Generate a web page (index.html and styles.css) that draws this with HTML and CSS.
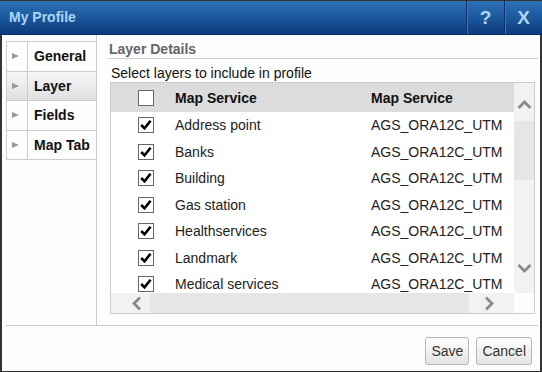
FILE: index.html
```html
<!DOCTYPE html>
<html lang="en">
<head>
  <meta charset="UTF-8">
  <title>My Profile</title>
  <link rel="stylesheet" href="styles.css">
</head>
<body>

  <div class="dialog">
    <div class="titlebar">
      <span class="title">My Profile</span>
      <span class="tb-btn">?</span>
      <span class="tb-btn">X</span>
    </div>

    <div class="dialog-body">
      <div class="main">
        <div class="nav">
          <ul>
            <li><span class="arrow"><svg width="7" height="6" viewBox="0 0 7 6"><path d="M0 0 L7 3 L0 6 Z"/></svg></span><span class="label">General</span></li>
            <li class="active"><span class="arrow"><svg width="7" height="6" viewBox="0 0 7 6"><path d="M0 0 L7 3 L0 6 Z"/></svg></span><span class="label">Layer</span></li>
            <li><span class="arrow"><svg width="7" height="6" viewBox="0 0 7 6"><path d="M0 0 L7 3 L0 6 Z"/></svg></span><span class="label">Fields</span></li>
            <li><span class="arrow"><svg width="7" height="6" viewBox="0 0 7 6"><path d="M0 0 L7 3 L0 6 Z"/></svg></span><span class="label">Map Tab</span></li>
          </ul>
        </div>

        <div class="panel">
          <div class="section-title">Layer Details</div>
          <div class="hint">Select layers to include in profile</div>

          <div class="grid">
            <div class="grid-top">
              <div class="grid-view">
                <div class="row head">
                  <span class="cell chk"><span class="box"></span></span>
                  <span class="cell">Map Service</span>
                  <span class="cell">Map Service</span>
                </div>
                <div class="rows">
                  <div class="row"><span class="cell chk"><span class="box checked"><svg viewBox="0 0 16 16"><path d="M2.5 8 L6.3 11.8 L13.2 3.2"/></svg></span></span><span class="cell">Address point</span><span class="cell">AGS_ORA12C_UTM</span></div>
                  <div class="row"><span class="cell chk"><span class="box checked"><svg viewBox="0 0 16 16"><path d="M2.5 8 L6.3 11.8 L13.2 3.2"/></svg></span></span><span class="cell">Banks</span><span class="cell">AGS_ORA12C_UTM</span></div>
                  <div class="row"><span class="cell chk"><span class="box checked"><svg viewBox="0 0 16 16"><path d="M2.5 8 L6.3 11.8 L13.2 3.2"/></svg></span></span><span class="cell">Building</span><span class="cell">AGS_ORA12C_UTM</span></div>
                  <div class="row"><span class="cell chk"><span class="box checked"><svg viewBox="0 0 16 16"><path d="M2.5 8 L6.3 11.8 L13.2 3.2"/></svg></span></span><span class="cell">Gas station</span><span class="cell">AGS_ORA12C_UTM</span></div>
                  <div class="row"><span class="cell chk"><span class="box checked"><svg viewBox="0 0 16 16"><path d="M2.5 8 L6.3 11.8 L13.2 3.2"/></svg></span></span><span class="cell">Healthservices</span><span class="cell">AGS_ORA12C_UTM</span></div>
                  <div class="row"><span class="cell chk"><span class="box checked"><svg viewBox="0 0 16 16"><path d="M2.5 8 L6.3 11.8 L13.2 3.2"/></svg></span></span><span class="cell">Landmark</span><span class="cell">AGS_ORA12C_UTM</span></div>
                  <div class="row"><span class="cell chk"><span class="box checked"><svg viewBox="0 0 16 16"><path d="M2.5 8 L6.3 11.8 L13.2 3.2"/></svg></span></span><span class="cell">Medical services</span><span class="cell">AGS_ORA12C_UTM</span></div>
                </div>
              </div>
              <div class="vscroll">
                <span class="sb-btn up"><svg width="15" height="10" viewBox="0 0 15 10"><path d="M1.5 8 L7.5 2 L13.5 8"/></svg></span>
                <span class="sb-thumb"></span>
                <span class="sb-track"></span>
                <span class="sb-btn down"><svg width="15" height="10" viewBox="0 0 15 10"><path d="M1.5 2 L7.5 8 L13.5 2"/></svg></span>
              </div>
            </div>
            <div class="hscroll">
              <span class="sb-btn left"><svg width="10" height="15" viewBox="0 0 10 15"><path d="M8 1.5 L2 7.5 L8 13.5"/></svg></span>
              <span class="sb-thumb"></span>
              <span class="sb-btn right"><svg width="10" height="15" viewBox="0 0 10 15"><path d="M2 1.5 L8 7.5 L2 13.5"/></svg></span>
              <span class="corner"></span>
            </div>
          </div>
        </div>
      </div>

      <div class="footer">
        <button class="btn">Save</button>
        <button class="btn">Cancel</button>
      </div>
    </div>
  </div>

</body>
</html>
```

FILE: styles.css
```css
* { box-sizing: border-box; margin: 0; padding: 0; }
body {
  font-family: 'Liberation Sans', Arial, sans-serif;
  font-size: 14px;
  color: #222;
  background: #fff;
}
.dialog {
  width: 542px;
  height: 372px;
  border: 1px solid #333;
  border-width: 1px 2px 1px 2px;
  background: #fdfdfd;
  display: flex;
  flex-direction: column;
}

/* title bar */
.titlebar {
  height: 34px;
  flex: none;
  display: flex;
  align-items: stretch;
  background: linear-gradient(#2e72b7, #1a5599 55%, #0c3a7f);
  border-bottom: 1px solid #0a2c60;
  margin: 0 -2px;
}
.title {
  flex: 1;
  padding-left: 9px;
  line-height: 33px;
  font-weight: 700;
  color: #aad6f6;
}
.tb-btn {
  width: 38px;
  text-align: center;
  line-height: 33px;
  font-size: 19px;
  font-weight: 700;
  color: #aad6f6;
  border-left: 1px solid #0b2f66;
  box-shadow: inset 1px 0 0 #3a7bbd;
}

.dialog-body {
  flex: 1;
  display: flex;
  flex-direction: column;
  padding: 0 2px 0 4px;
}
.main {
  flex: 1;
  display: flex;
}

/* left tabs */
.nav {
  width: 91px;
  padding-top: 6px;
  border-right: 1px solid #ccc;
}
.nav ul {
  list-style: none;
  border-left: 1px solid #ccc;
  border-top: 1px solid #ccc;
}
.nav li {
  height: 29.5px;
  display: flex;
  border-bottom: 1px solid #ccc;
}
.nav li.active { background: linear-gradient(#f7f7f7, #e0e0e0); }
.nav .arrow {
  width: 21px;
  border-right: 1px solid #ccc;
  display: flex;
  align-items: center;
  padding-left: 5px;
}
.nav .arrow svg { fill: #999; }
.nav .label {
  padding-left: 6px;
  line-height: 28px;
  font-weight: 700;
  color: #111;
}

/* right panel */
.panel {
  flex: 1;
  padding: 6px 0 0 11px;
}
.section-title {
  line-height: 16px;
  padding: 0 0 1px 1px;
  font-weight: 700;
  color: #666;
  border-bottom: 1px solid #ccc;
}
.hint {
  margin-top: 6px;
  padding-left: 3px;
  line-height: 16px;
  color: #111;
}
.grid {
  margin: 1px 3px 0 2px;
  border: 1px solid #ccc;
  height: 232px;
  display: flex;
  flex-direction: column;
}
.grid-top {
  flex: 1;
  display: flex;
  min-height: 0;
}
.grid-view {
  flex: 1;
  overflow: hidden;
  background: #fff;
}
.row {
  display: grid;
  grid-template-columns: 54px 196px 1fr;
  height: 26.5px;
  align-items: center;
}
.row.head {
  height: 29px;
  background: #dcdcdc;
  font-weight: 700;
  color: #111;
}
.cell { padding-left: 10px; white-space: nowrap; }
.cell.chk { padding-left: 27px; display: flex; }
.box {
  width: 16px;
  height: 16px;
  border: 1px solid #666;
  background: #fff;
}
.box svg {
  display: block;
  width: 14px;
  height: 14px;
  fill: none;
  stroke: #000;
  stroke-width: 3;
}

/* scrollbars */
.vscroll {
  width: 20px;
  display: flex;
  flex-direction: column;
  background: #f2f2f2;
}
.vscroll .sb-btn { display: flex; justify-content: center; }
.vscroll .sb-btn.up { height: 38px; padding-top: 17px; }
.vscroll .sb-btn.down { height: 50px; padding-top: 20px; }
.vscroll .sb-thumb { height: 59px; background: #e6e6e6; }
.vscroll .sb-track { flex: 1; }
.sb-btn svg { fill: none; stroke: #8a8a8a; stroke-width: 2.8; }
.hscroll {
  height: 20px;
  flex: none;
  display: flex;
  background: #f2f2f2;
}
.hscroll .sb-btn { display: flex; align-items: center; }
.hscroll .sb-btn.left { width: 39px; justify-content: flex-end; padding-right: 8px; }
.hscroll .sb-btn.right { width: 45px; padding-left: 15px; }
.hscroll .sb-thumb { flex: 1; background: #e6e6e6; }
.hscroll .corner { width: 20px; background: #fdfdfd; }

/* footer */
.footer {
  flex: none;
  height: 46px;
  border-top: 1px solid #ccc;
  display: flex;
  justify-content: flex-end;
  align-items: flex-start;
  gap: 7px;
  padding: 11px 6px 0 0;
}
.btn {
  height: 28px;
  padding: 0 5px;
  font-family: inherit;
  font-size: 14px;
  color: #333;
  background: linear-gradient(#fefefe, #e4e4e4);
  border: 1px solid #b5b5b5;
  border-radius: 3px;
}
```
